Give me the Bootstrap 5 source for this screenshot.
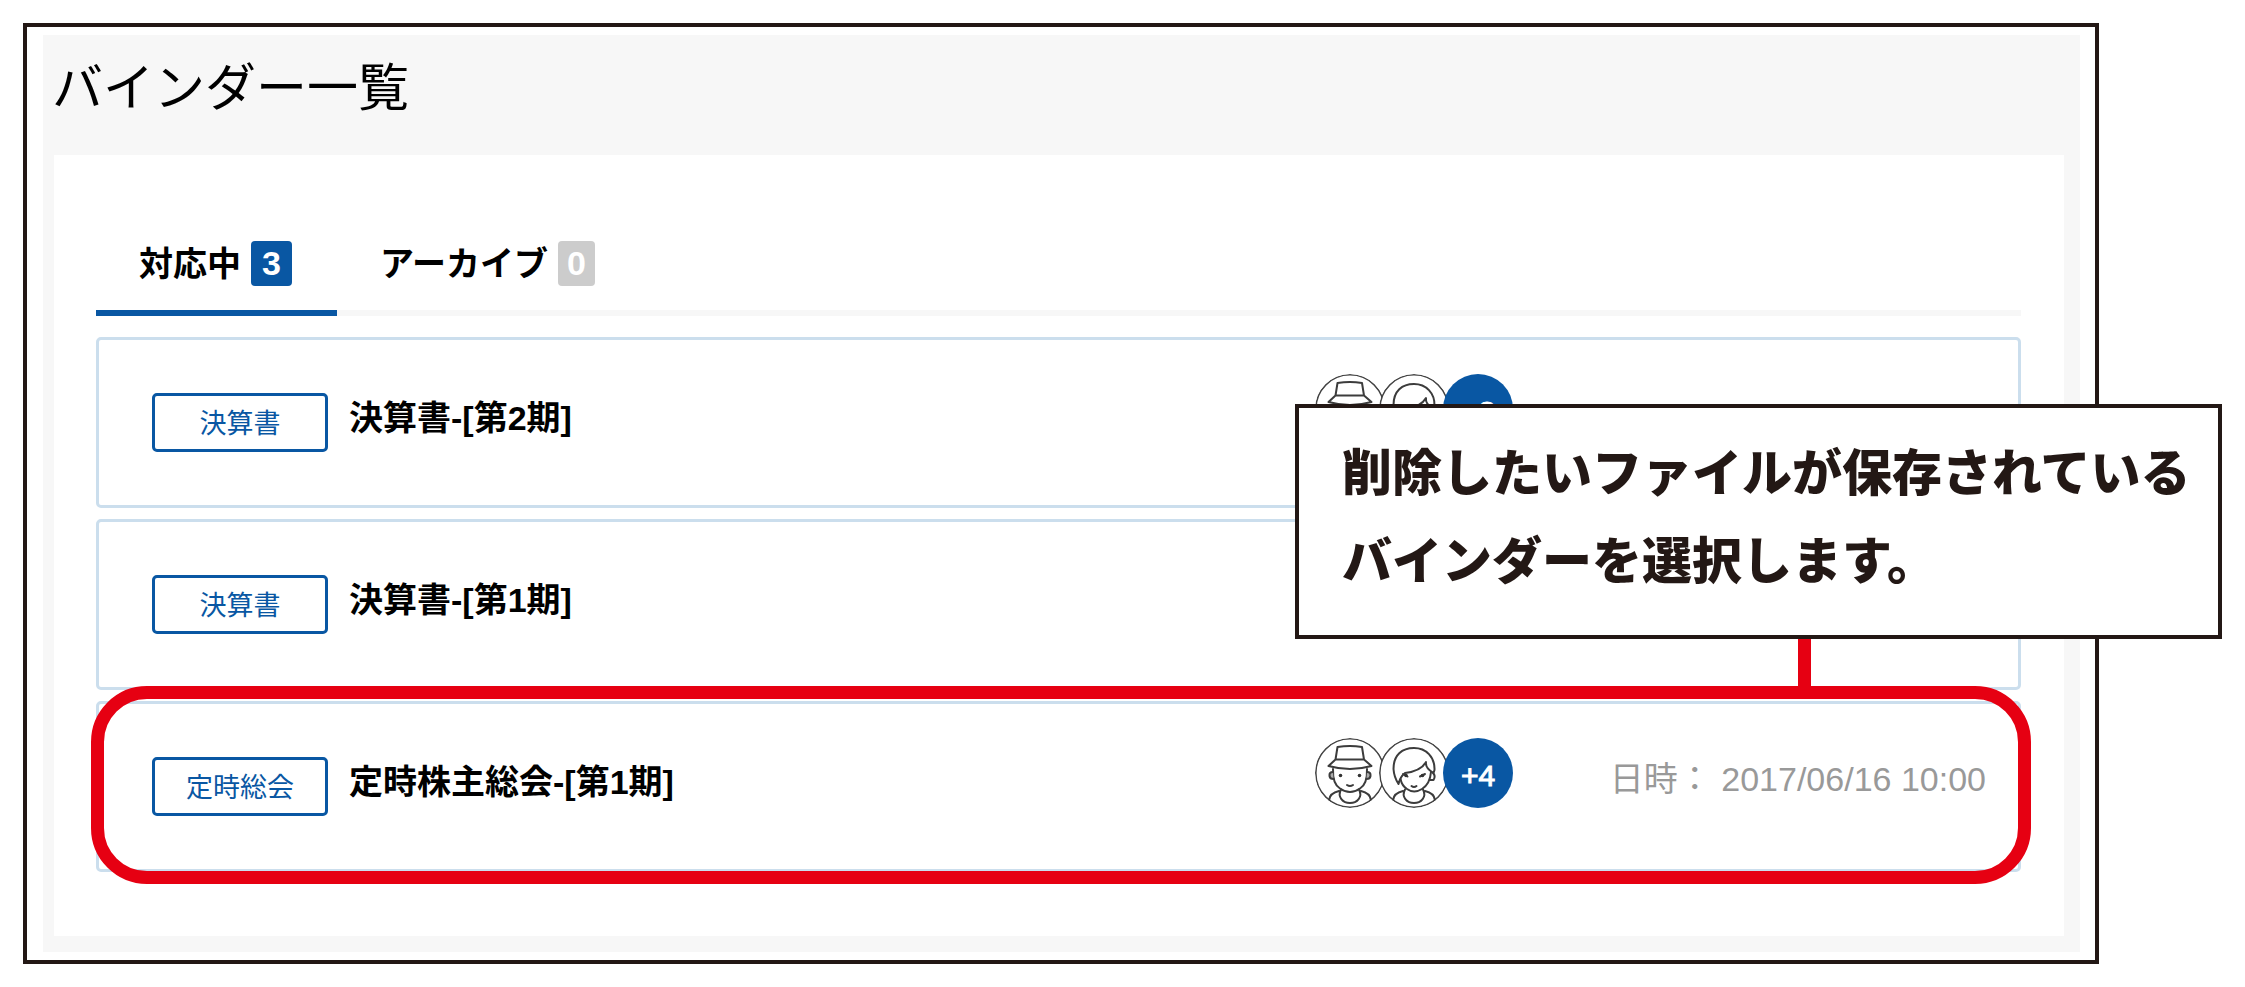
<!DOCTYPE html>
<html lang="ja">
<head>
<meta charset="utf-8">
<meta name="viewport" content="width=device-width, initial-scale=1">
<title>バインダー一覧</title>
<link href="https://cdn.jsdelivr.net/npm/bootstrap@5.3.0/dist/css/bootstrap.min.css" rel="stylesheet">
<style>
  :root { --brand: #0957a3; --ink: #231815; --alert: #e60012; --line: #cbdeed; --soft: #f7f7f7; }
  body { font-family: "Liberation Sans", "Noto Sans CJK JP", sans-serif; color: #000; background: #fff; padding: 23px 146px 23px 23px; font-size: 34px; line-height: 40px; }
  .page-frame { border: 4px solid var(--ink); padding: 8px 15px 8px 16px; }
  .page-area { background: var(--soft); padding: 0 16px 16px 11px; }
  .page-title { font-family: "Noto Sans CJK JP", sans-serif; font-size: 51px; line-height: 60px; font-weight: 400; padding: 19px 0 41px; margin: 0 0 0 -2px; }
  .panel { background: #fff; padding: 72px 43px 64px 42px; }
  .tab-row { border-bottom: 6px solid var(--soft); }
  .tab-btn { background: none; border: 0; border-bottom: 6px solid transparent; margin-bottom: -6px; padding: 14px 45px 24px 43px; font-weight: 700; color: #000; gap: 10px; }
  .tab-btn.active { border-bottom-color: var(--brand); }
  .tab-count { background: #ccc; color: #fff; border-radius: 4px; line-height: 45px; padding: 0 9px; font-weight: 700; font-size: 34px; }
  .active .tab-count { background: var(--brand); padding: 0 11px; }
  .binder-list { padding-top: 21px; gap: 11px; }
  .binder { border: 3px solid var(--line); border-radius: 5px; height: 171px; padding: 0 32px 0 53px; }
  .tag-btn { width: 176px; height: 59px; border: 3px solid var(--brand); border-radius: 5px; background: #fff; color: var(--brand); font-size: 27px; line-height: 40px; padding: 2px 0 0; }
  .binder-name { font-weight: 700; color: #000; text-decoration: none; margin: 0 0 10px 21px; }
  .people { margin-bottom: 27px; }
  .person, .more { width: 70px; height: 70px; border-radius: 50%; margin-left: -6px; flex: none; }
  .more { background: var(--brand); color: #fff; font-size: 30px; line-height: 76px; text-align: center; -webkit-text-stroke: 1px #fff; }
  .meta { width: 380px; margin: 0 0 16px 93px; color: #999; text-align: right; white-space: pre; }
  .ring { position: absolute; inset: -18px -13px -15px -8px; border: 13px solid var(--alert); border-radius: 56px; pointer-events: none; }
  .stem { position: absolute; width: 13px; height: 54px; background: var(--alert); right: 207px; bottom: calc(100% + 11px); }
  .callout { position: absolute; right: -204px; bottom: calc(100% + 65px); width: 927px; border: 4px solid var(--ink); background: #fff; color: var(--ink); font: 900 50px/88px "Noto Sans CJK JP", sans-serif; padding: 17px 0 34px 43px; margin: 0; white-space: nowrap; z-index: 2; }
</style>
</head>
<body>
<svg class="d-none" aria-hidden="true">
  <symbol id="man" viewBox="0 0 70 70">
    <circle cx="35" cy="35" r="34.2" fill="#fff" stroke="#444" stroke-width="1.6"/>
    <g fill="none" stroke="#3c3c3c" stroke-width="2" stroke-linejoin="round" stroke-linecap="round">
      <path d="M20.500 21.500 22.500 9Q35 7 47 9L49 21.500ZM20.500 21.500 13.500 28Q35 34 56.500 28L49 21.500"/>
      <path d="M18 31Q17.500 46 25 50.500C32 55.500 38 55.500 45 50.500Q52.500 46 52 31"/>
      <path d="M18 34Q14 34 14.500 38Q15 41 18.500 41M52 34Q56 34 55.500 38Q55 41 51.500 41" fill="#aaa"/>
      <path d="M26 51.500C22 59 28 65 35 65S48 59 44 51.500M24 53Q15 55 14 62M46 53Q55 55 56 62"/>
      <path d="M32 47Q35 49 38 47"/>
    </g>
    <circle cx="25.500" cy="37.500" r="1.800" fill="#333"/><circle cx="44.500" cy="37.500" r="1.800" fill="#333"/>
  </symbol>
  <symbol id="woman" viewBox="0 0 70 70">
    <circle cx="35" cy="35" r="34.2" fill="#fff" stroke="#444" stroke-width="1.6"/>
    <g fill="none" stroke="#3c3c3c" stroke-width="2" stroke-linejoin="round" stroke-linecap="round">
      <path d="M19.500 46Q15 39 14.500 31C14.500 17 23 10 35 10S56 19 55.500 32L54.500 35M19.500 46Q21 39 26 35Q42 33 47 24Q46 30 54.500 35"/>
      <path d="M21.500 41Q23 48 28 51Q35 56 43 51Q51 46 52 34M54 35Q57 38 54.500 42H51.500"/>
      <path d="M26 51.500C22 59 28 65 35 65S48 59 44 51.500M24 53Q15 55 14 62M46 53Q55 55 56 62"/>
      <path d="M32.500 48Q35 50 37.500 48M24 36 28.500 38.500M41 38.500 46 36"/>
    </g>
    <circle cx="27" cy="37.500" r="1.800" fill="#333"/><circle cx="43.500" cy="37.500" r="1.800" fill="#333"/>
  </symbol>
</svg>

<main class="page-frame">
  <div class="page-area">
    <h1 class="page-title">バインダー一覧</h1>
    <section class="panel">
      <div class="tab-row d-flex" role="tablist">
        <button type="button" class="tab-btn active d-flex align-items-center" role="tab" aria-selected="true">対応中<span class="tab-count">3</span></button>
        <button type="button" class="tab-btn d-flex align-items-center" role="tab" aria-selected="false">アーカイブ<span class="tab-count">0</span></button>
      </div>
      <ul class="binder-list list-unstyled d-flex flex-column mb-0">
        <li class="binder d-flex align-items-center">
          <button type="button" class="tag-btn">決算書</button>
          <a href="#" class="binder-name me-auto">決算書-[第2期]</a>
          <div class="people d-flex">
            <svg class="person"><use href="#man"/></svg><svg class="person"><use href="#woman"/></svg><span class="more">+2</span>
          </div>
          <div class="meta"></div>
        </li>
        <li class="binder d-flex align-items-center">
          <button type="button" class="tag-btn">決算書</button>
          <a href="#" class="binder-name me-auto">決算書-[第1期]</a>
        </li>
        <li class="binder d-flex align-items-center position-relative">
          <button type="button" class="tag-btn">定時総会</button>
          <a href="#" class="binder-name me-auto">定時株主総会-[第1期]</a>
          <div class="people d-flex">
            <svg class="person"><use href="#man"/></svg><svg class="person"><use href="#woman"/></svg><span class="more">+4</span>
          </div>
          <div class="meta">日時： 2017/06/16 10:00</div>
          <div class="ring"></div>
          <div class="stem"></div>
          <p class="callout">削除したいファイルが保存されている<br>バインダーを選択します。</p>
        </li>
      </ul>
    </section>
  </div>
</main>
<script src="https://cdn.jsdelivr.net/npm/bootstrap@5.3.0/dist/js/bootstrap.bundle.min.js"></script>
</body>
</html>
